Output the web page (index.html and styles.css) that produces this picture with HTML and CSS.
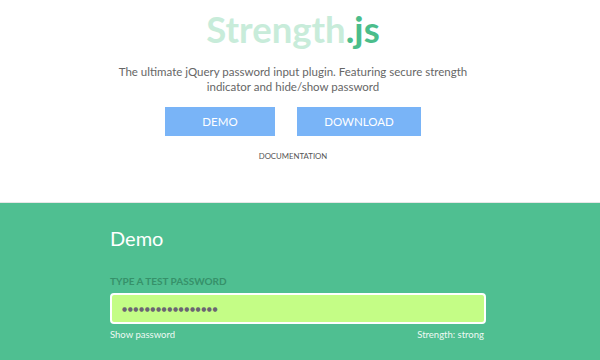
FILE: index.html
```html
<!DOCTYPE html>
<html>
<head>
<meta charset="utf-8">
<link rel="stylesheet" href="styles.css">
</head>
<body>
<header class="hero">
  <h1 class="title"><span class="light">Strength</span><span class="dark">.js</span></h1>
  <p class="lead">The ultimate jQuery password input plugin. Featuring secure strength indicator and hide/show password</p>
  <div class="buttons">
    <a class="btn btn-demo">DEMO</a>
    <a class="btn btn-dl">DOWNLOAD</a>
  </div>
  <a class="docs">DOCUMENTATION</a>
</header>
<section class="demo">
  <div class="inner">
    <h2 class="demo-title">Demo</h2>
    <label class="label">TYPE A TEST PASSWORD</label>
    <div class="input"><span class="dots">●●●●●●●●●●●●●●●●●</span></div>
    <div class="meta">
      <span>Show password</span>
      <span>Strength: strong</span>
    </div>
  </div>
</section>
</body>
</html>
```
FILE: styles.css
```css
html, body { margin: 0; padding: 0; }
body {
  font-family: Lato, "Open Sans", sans-serif;
  background: #fff;
  width: 600px;
  height: 360px;
  overflow: hidden;
}
.hero {
  height: 203px;
  box-sizing: border-box;
  padding-top: 6px;
  padding-right: 14px;
  display: flex;
  flex-direction: column;
  align-items: center;
  border-bottom: 1px solid #e6e6e6;
}
.title {
  margin: 0;
  font-size: 36.5px;
  font-weight: 700;
  line-height: 46px;
}
.light { color: #c8ecda; }
.dark { color: #4bbd8b; }
.lead {
  margin: 13px 0 0;
  width: 390px;
  text-align: center;
  font-size: 11.5px;
  line-height: 14.5px;
  color: #666;
}
.buttons {
  display: flex;
  gap: 22px;
  margin-top: 13px;
}
.btn {
  background: #79b4f7;
  color: #fff;
  font-size: 11.5px;
  height: 29px;
  display: flex;
  align-items: center;
  justify-content: center;
}
.btn-demo { width: 110px; }
.btn-dl { width: 124px; }
.docs {
  margin-top: 15px;
  font-size: 7.8px;
  color: #555;
}
.demo {
  background: #4fbf91;
  height: 157px;
  padding-left: 110px;
}
.inner {
  width: 376px;
  padding-top: 23px;
}
.demo-title {
  margin: 0;
  font-weight: 400;
  font-size: 20px;
  line-height: 24px;
  color: #fff;
}
.label {
  display: block;
  margin-top: 25px;
  font-size: 10px;
  font-weight: 700;
  color: #36916a;
  line-height: 12px;
}
.input {
  margin-top: 6px;
  height: 27px;
  border: 2px solid #fff;
  border-radius: 4px;
  background: #c4fd86;
  padding-left: 10px;
  display: flex;
  align-items: center;
  box-sizing: content-box;
}
.dots {
  color: #6a6472;
  font-size: 5.8px;
  letter-spacing: 0.6px;
  font-family: "DejaVu Sans", sans-serif;
}
.meta {
  display: flex;
  justify-content: space-between;
  margin-top: 5px;
  font-size: 9.5px;
  color: #eef9f3;
  padding-right: 2px;
}
```
